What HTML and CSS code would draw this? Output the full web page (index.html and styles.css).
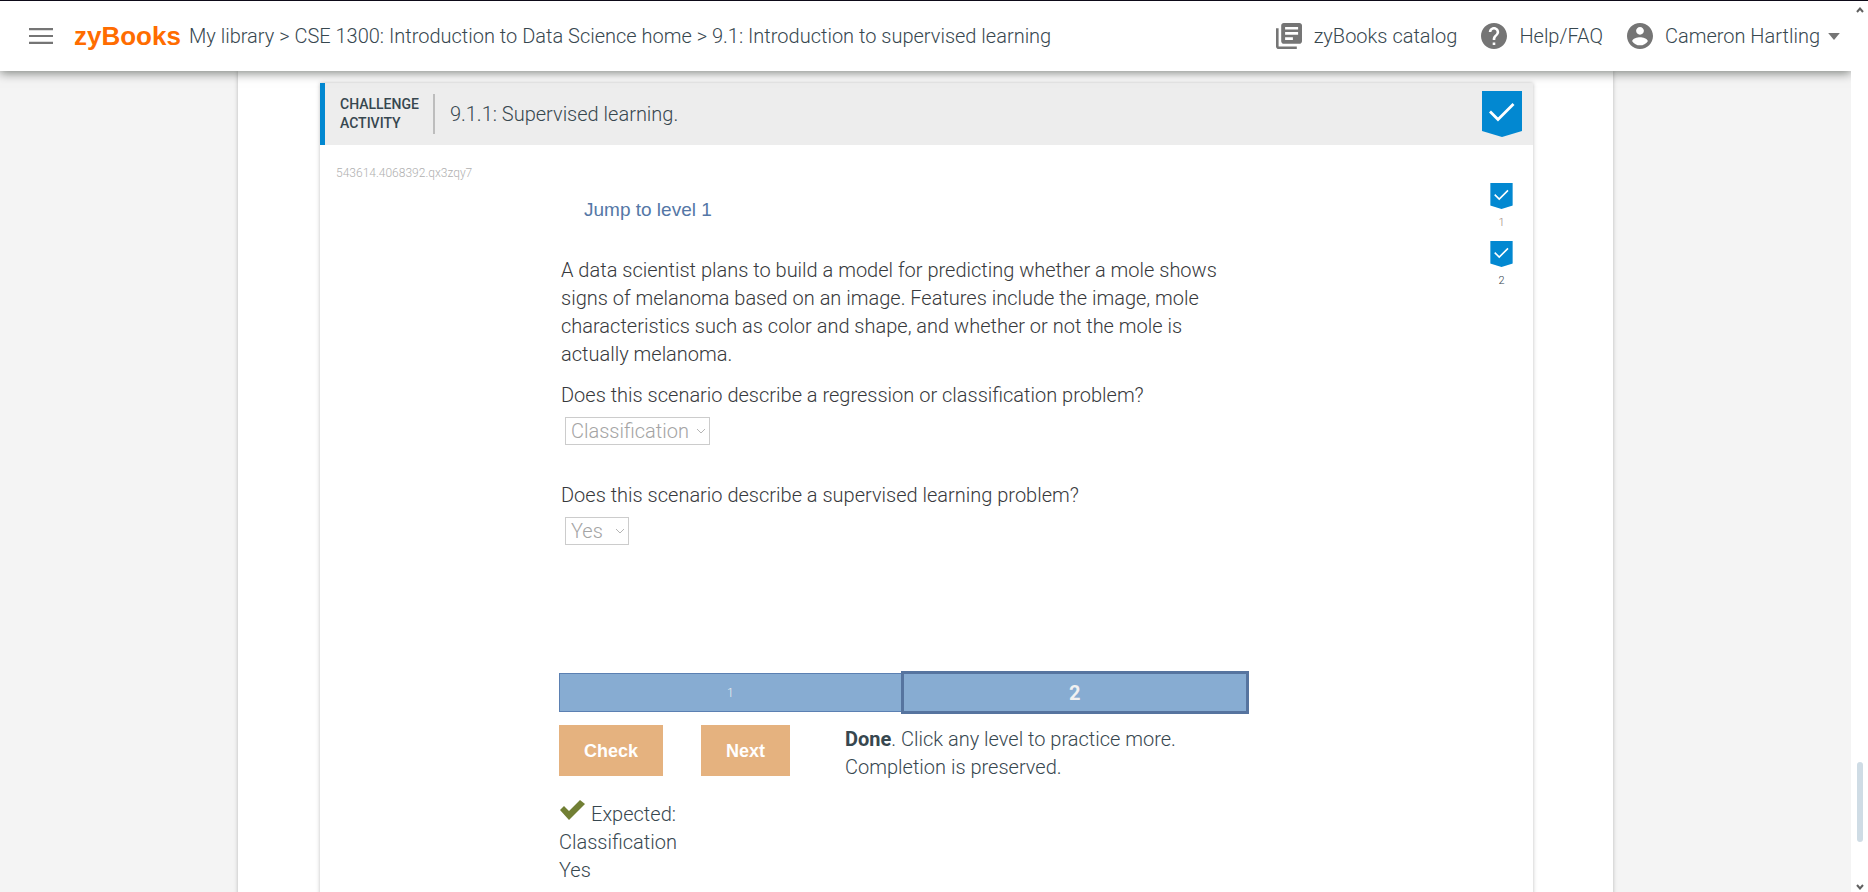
FILE: index.html
```html
<!DOCTYPE html>
<html lang="en">
<head>
<meta charset="utf-8">
<title>9.1: Introduction to supervised learning</title>
<link rel="stylesheet" href="styles.css">
</head>
<body>
<svg class="defs" aria-hidden="true">
  <symbol id="ribbon" viewBox="0 0 40 46"><path fill="#0288d1" d="M0 0h40v40l-20 6-20-6z"/><path fill="none" stroke="#fff" stroke-width="2.8" d="M8 20.500l8 8L31.500 13"/></symbol>
</svg>
<div class="app">
  <div class="main">
    <header class="topbar">
      <button class="icon-button" aria-label="Menu"><svg viewBox="0 0 22 16" width="24" height="16" preserveAspectRatio="none"><path d="M0 0h22v2.200H0zM0 6.900h22v2.200H0zM0 13.800h22V16H0z"/></svg></button>
      <a class="logo" href="#">zyBooks</a>
      <nav class="crumbs" aria-label="Breadcrumb"><a href="#">My library</a> &gt; <a href="#">CSE 1300: Introduction to Data Science home</a> &gt; <span>9.1: Introduction to supervised learning</span></nav>
      <nav class="tools" aria-label="Account">
        <a href="#"><svg viewBox="2 2 20 20" width="26" height="26"><path d="M4 6H2v14c0 1.100.9 2 2 2h14v-2H4V6zm16-4H8c-1.100 0-2 .9-2 2v12c0 1.100.9 2 2 2h12c1.100 0 2-.9 2-2V4c0-1.100-.9-2-2-2zm-1 9H9V9h10v2zm-4 4H9v-2h6v2zm4-8H9V5h10v2z"/></svg>zyBooks catalog</a>
        <a href="#"><svg viewBox="2 2 20 20" width="26" height="26"><path d="M12 2C6.480 2 2 6.480 2 12s4.480 10 10 10 10-4.480 10-10S17.520 2 12 2zm1 17h-2v-2h2v2zm2.070-7.750l-.9.920C13.450 12.900 13 13.500 13 15h-2v-.5c0-1.100.450-2.100 1.170-2.830l1.240-1.260c.370-.360.590-.860.590-1.410 0-1.100-.9-2-2-2s-2 .9-2 2H8c0-2.210 1.790-4 4-4s4 1.790 4 4c0 .880-.360 1.680-.930 2.250z"/></svg>Help/FAQ</a>
        <button class="user"><svg viewBox="2 2 20 20" width="26" height="26"><path d="M12 2C6.480 2 2 6.480 2 12s4.480 10 10 10 10-4.480 10-10S17.520 2 12 2zm0 3c1.660 0 3 1.340 3 3s-1.340 3-3 3-3-1.340-3-3 1.340-3 3-3zm0 14.200c-2.500 0-4.710-1.280-6-3.220.030-1.990 4-3.080 6-3.080 1.990 0 5.970 1.090 6 3.080-1.290 1.940-3.500 3.220-6 3.220z"/></svg>Cameron Hartling<svg class="caret" viewBox="0 0 10 6" width="12" height="7"><path d="M0 0h10L5 6z"/></svg></button>
      </nav>
    </header>
    <div class="viewport">
      <main class="page">
        <section class="card">
          <header class="card-head">
            <div class="kind">CHALLENGE<br>ACTIVITY</div>
            <h1 class="card-title">9.1.1: Supervised learning.</h1>
            <svg class="badge" role="img" aria-label="Activity completed" viewBox="0 0 40 46"><use href="#ribbon"/></svg>
          </header>
          <div class="card-body">
            <div class="serial">543614.4068392.qx3zqy7</div>
            <div class="columns">
              <div class="activity">
                <button class="jump">Jump to level 1</button>
                <div class="question">
                  <p>A data scientist plans to build a model for predicting whether a mole shows signs of melanoma based on an image. Features include the image, mole characteristics such as color and shape, and whether or not the mole is actually melanoma.</p>
                  <div class="field">
                    <label for="q1">Does this scenario describe a regression or classification problem?</label>
                    <span class="pick pick-wide"><select id="q1" disabled><option>Classification</option></select><svg viewBox="0 0 10 6" width="10" height="6"><path d="M1 1l4 4 4-4"/></svg></span>
                  </div>
                  <div class="field">
                    <label for="q2">Does this scenario describe a supervised learning problem?</label>
                    <span class="pick"><select id="q2" disabled><option>Yes</option></select><svg viewBox="0 0 10 6" width="10" height="6"><path d="M1 1l4 4 4-4"/></svg></span>
                  </div>
                </div>
                <div class="levels"><button class="level">1</button><button class="level current">2</button></div>
                <div class="actions">
                  <button class="action">Check</button>
                  <button class="action">Next</button>
                  <p class="status"><strong>Done</strong>. Click any level to practice more. Completion is preserved.</p>
                </div>
                <div class="result">
                  <div class="verdict"><svg viewBox="0 0 26 20" width="26" height="20"><path d="M1 10l4-4 5 5L21 0l5 4-16 16z"/></svg>Expected:</div>
                  <div>Classification</div>
                  <div>Yes</div>
                </div>
              </div>
              <ol class="steps">
                <li class="first"><svg viewBox="0 0 40 46"><use href="#ribbon"/></svg>1</li>
                <li><svg viewBox="0 0 40 46"><use href="#ribbon"/></svg>2</li>
              </ol>
            </div>
          </div>
        </section>
      </main>
    </div>
  </div>
  <div class="scrollbar" aria-hidden="true">
    <svg viewBox="0 0 8 6" width="8" height="6"><path d="M1 5l3-3.500L7 5"/></svg>
    <div class="track"><div class="thumb"></div></div>
    <svg viewBox="0 0 8 6" width="8" height="6"><path d="M1 1l3 3.500L7 1"/></svg>
  </div>
</div>
</body>
</html>
```
FILE: styles.css
```css
* { box-sizing: border-box; }
body {
  margin: 0;
  font: 300 20px/28px Roboto, "Liberation Sans", sans-serif;
  color: #37474f;
  background: #fff;
}
button {
  font: inherit;
  color: inherit;
  background: none;
  border: 0;
  padding: 0;
}
a { color: inherit; text-decoration: none; }
p { margin: 0; }
strong { font-weight: 700; }
.defs { position: absolute; width: 0; height: 0; }

.app {
  display: flex;
  height: 100vh;
  border-top: 1px solid #0d0a18;
  overflow: hidden;
}
.main {
  flex: 1;
  min-width: 0;
  display: flex;
  flex-direction: column;
  overflow: hidden;
}

.topbar {
  position: relative;
  z-index: 1;
  flex: none;
  display: flex;
  align-items: center;
  height: 70px;
  padding: 0 11px 0 29px;
  background: #fff;
  box-shadow: 0 2px 10px rgba(0, 10, 0, .5);
  white-space: nowrap;
}
.icon-button { display: flex; width: 24px; margin-right: 21px; }
.topbar svg { fill: #757575; flex: none; }
.logo {
  font: 700 26px/28px "Liberation Sans", sans-serif;
  color: #ff6c00;
  width: 106px;
  margin-right: 9px;
}
.tools { display: flex; gap: 24px; margin-left: auto; }
.tools a, .user { display: flex; align-items: center; gap: 12px; }
.user .caret { margin-left: -4px; }

.viewport { flex: 1; min-height: 0; overflow: hidden; background: #f4f4f4; }
.page {
  max-width: 1375px;
  margin: 0 auto;
  padding: 12px 80px 0 82px;
  background: #fff;
  box-shadow: 0 0 4px rgba(0, 0, 0, .25);
}
.card { box-shadow: 0 0 4px rgba(0, 0, 0, .25); padding-bottom: 40px; }
.card-head {
  display: flex;
  align-items: center;
  height: 62px;
  padding-right: 11px;
  border-left: 5px solid #0288d1;
  background: #ededed;
}
.kind {
  font-size: 14px;
  font-weight: 500;
  line-height: 19px;
  padding: 1px 14px 1px 15px;
  border-right: 2px solid #bdbdbd;
}
.card-title { font-size: 20px; font-weight: 300; margin: 0; padding-left: 15px; }
.badge { width: 40px; height: 46px; margin-left: auto; }

.serial { font-size: 12px; line-height: 20px; color: #b0b0b0; padding: 18px 16px 0; }
.columns { display: flex; align-items: flex-start; }
.activity { flex: 1; max-width: 690px; margin: 0 auto; }
.jump {
  display: block;
  font: 400 19px/28px "Liberation Sans", sans-serif;
  color: #5477a6;
  margin: 13px 25px 0;
}
.question { min-height: 447px; padding: 32px 24px 0 2px; color: #37393c; }
.field { display: flex; flex-direction: column; align-items: flex-start; margin-top: 13px; }
.field + .field { margin-top: 36px; }
.pick { position: relative; display: flex; width: 64px; margin: 8px 4px 0; }
.pick-wide { width: 145px; }
.pick select {
  appearance: none;
  width: 100%;
  height: 28px;
  padding: 0 5px;
  font: inherit;
  line-height: 26px;
  color: #a4a4a4;
  background: #fff;
  border: 1px solid #ccc;
  border-radius: 0;
  opacity: 1;
}
.pick svg { position: absolute; right: 4px; top: 11px; fill: none; stroke: #b5b5b5; }

.levels { display: flex; align-items: center; }
.level {
  flex: 1 1 0;
  height: 39px;
  font-size: 12px;
  color: #f1f1f1;
  background: #87acd2;
  border: 1px solid #5b80b2;
  border-right: 0;
}
.level.current {
  height: 43px;
  flex-basis: 8px;
  font-size: 20px;
  font-weight: 700;
  border: 3px solid #56749f;
}
.actions { display: flex; align-items: flex-start; margin-top: 11px; }
.action {
  height: 51px;
  padding: 0 25px;
  margin-right: 38px;
  font: 700 18px/28px "Liberation Sans", sans-serif;
  color: #fff;
  background: #e5b27f;
}
.status { flex: 1; max-width: 360px; margin-left: 17px; }
.result { margin-top: 19px; }
.verdict { display: flex; align-items: flex-start; gap: 6px; }
.result svg { fill: #717f34; }

.steps {
  list-style: none;
  flex: none;
  width: 45px;
  margin: 0;
  padding: 0 20px 0 2px;
  font-size: 11px;
  line-height: 28px;
  text-align: center;
}
.steps li { margin-bottom: 4px; }
.steps .first { color: #a1887f; }
.steps svg { display: block; width: 23px; height: 26px; }

.scrollbar {
  flex: none;
  width: 17px;
  display: flex;
  flex-direction: column;
  align-items: center;
  padding: 6px 0 2px;
  background: #fff;
}
.scrollbar svg { fill: none; stroke: #606060; stroke-width: 2; }
.track { flex: 1; display: flex; flex-direction: column; justify-content: flex-end; }
.thumb { width: 6px; height: 80px; margin-bottom: 42px; border-radius: 3px; background: #cfdce5; }
```
